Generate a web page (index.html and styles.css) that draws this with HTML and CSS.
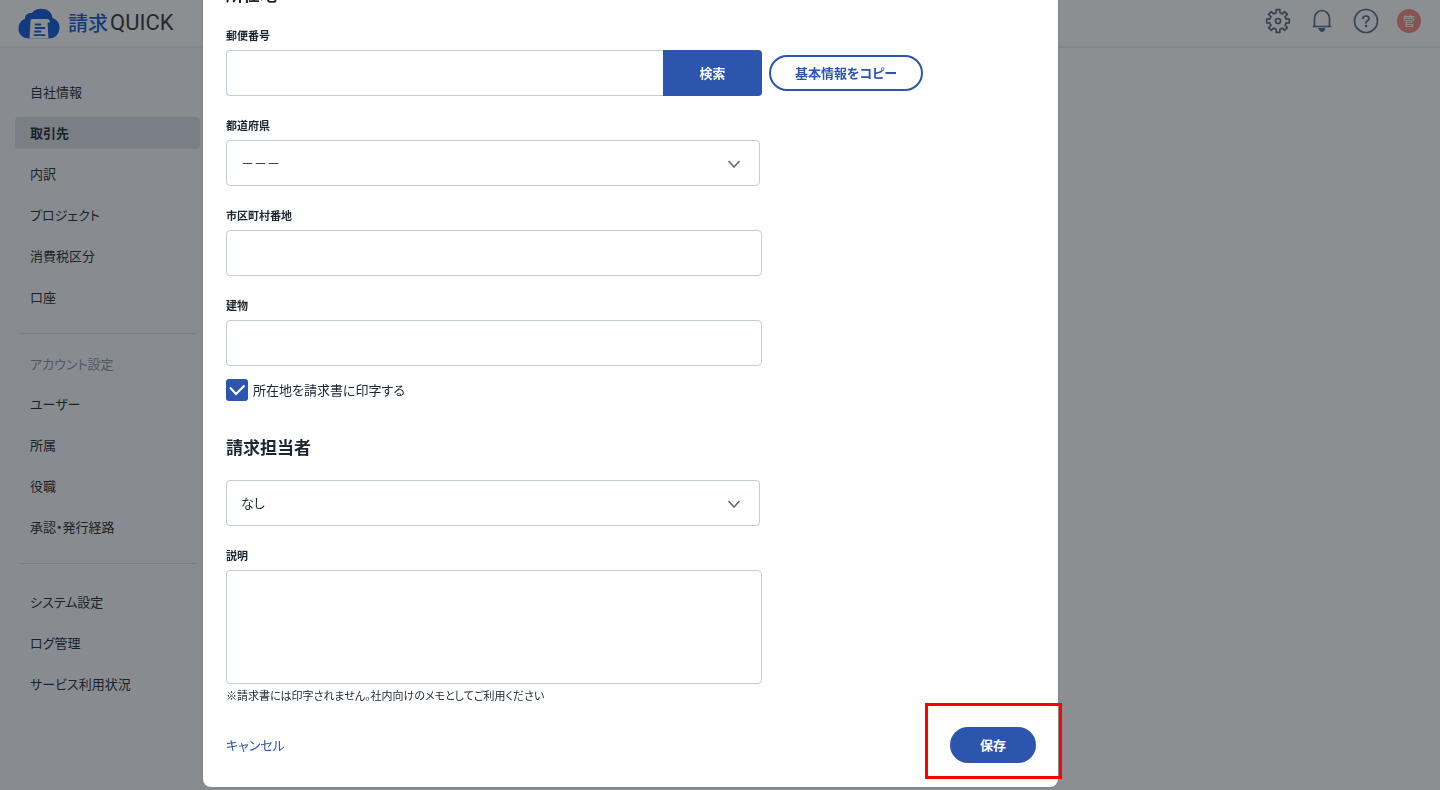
FILE: index.html
```html
<!DOCTYPE html>
<html lang="ja">
<head>
<meta charset="utf-8">
<title>請求QUICK</title>
<link rel="stylesheet" href="styles.css">
</head>
<body>
<header class="header">
  <a class="logo" href="#">
    <svg class="logo-mark" width="42" height="32" viewBox="0 0 42 32" aria-hidden="true">
      <path fill="#0d54d8" d="M11 30.500C5 30.500 .5 26.500 .5 21C.5 16 3 12 7 11C6.500 7 10 4.500 14 5C16 2 19 .8 23 .8C29 .8 34 4 34.500 10C39 11.500 41.500 15 41.500 19.500C41.500 26 37 30.500 31 30.500Z"/>
      <path fill="#fff" d="M14 11H30Q32 11.500 32 14.500H29.500L30.500 30.500H11.500L12.500 13Q12.600 11.200 14 11Z"/>
      <path stroke="#0d54d8" stroke-width="1.800" stroke-linecap="round" fill="none" d="M17.500 16.500H22.500M17.500 20H26.500M17 23.500H22.500M16.500 27.200H26.500"/>
    </svg>
    <span class="logo-name">請求</span><span class="logo-quick">QUICK</span>
  </a>
  <div class="tools">
    <button class="tool" aria-label="設定">
      <svg width="26" height="26" viewBox="0 0 26 26"><path d="M11.100 1.700H14.900V4.800L17.450 5.860L19.650 3.670L22.330 6.350L20.140 8.550L21.200 11.100H24.300V14.900H21.200L20.140 17.450L22.330 19.650L19.650 22.330L17.450 20.140L14.900 21.200V24.300H11.100V21.200L8.550 20.140L6.350 22.330L3.670 19.650L5.860 17.450L4.800 14.900H1.700V11.100H4.800L5.860 8.550L3.670 6.350L6.350 3.670L8.550 5.860L11.100 4.800Z"/><circle cx="13" cy="13" r="2.500"/></svg>
    </button>
    <button class="tool" aria-label="通知">
      <svg width="26" height="26" viewBox="0 0 26 26"><path d="M4.500 18.500H21.500M5.500 18.500V10.500A7.500 8 0 0 1 20.500 10.500V18.500"/><path class="clapper" d="M10 20.500H16Q15.500 23.500 13 23.500T10 20.500Z"/></svg>
    </button>
    <button class="tool" aria-label="ヘルプ">
      <svg width="26" height="26" viewBox="0 0 26 26"><circle cx="13" cy="13" r="11.500"/><path d="M10 10.500Q10 8 13 8T16 10.500Q16 12 14.500 12.800T13 15"/><circle cx="13" cy="18" r=".5"/></svg>
    </button>
    <button class="avatar">管</button>
  </div>
</header>

<div class="page">
  <nav class="sidebar">
    <ul class="menu">
      <li><a href="#">自社情報</a></li>
      <li><a class="current" href="#" aria-current="page">取引先</a></li>
      <li><a href="#">内訳</a></li>
      <li><a href="#">プロジェクト</a></li>
      <li><a href="#">消費税区分</a></li>
      <li><a href="#">口座</a></li>
    </ul>
    <hr class="rule">
    <h2 class="menu-title">アカウント設定</h2>
    <ul class="menu">
      <li><a href="#">ユーザー</a></li>
      <li><a href="#">所属</a></li>
      <li><a href="#">役職</a></li>
      <li><a href="#">承認・発行経路</a></li>
    </ul>
    <hr class="rule">
    <ul class="menu menu-last">
      <li><a href="#">システム設定</a></li>
      <li><a href="#">ログ管理</a></li>
      <li><a href="#">サービス利用状況</a></li>
    </ul>
  </nav>
</div>

<div class="overlay">
  <form class="modal" role="dialog" aria-label="取引先">
    <h2 class="section-title">所在地</h2>
    <div class="fields">
      <div class="field">
        <label for="zip">郵便番号</label>
        <div class="zip-row">
          <div class="zip-group">
            <input class="box zip" id="zip" type="text">
            <button class="search" type="button">検索</button>
          </div>
          <button class="copy" type="button">基本情報をコピー</button>
        </div>
      </div>
      <div class="field">
        <label for="pref">都道府県</label>
        <div class="select">
          <select class="box" id="pref"><option>－－－</option></select>
          <svg class="chevron" width="14" height="8" viewBox="0 0 14 8" aria-hidden="true"><path d="M1.500 1L7 7L12.500 1"/></svg>
        </div>
      </div>
      <div class="field">
        <label for="city">市区町村番地</label>
        <input class="box" id="city" type="text">
      </div>
      <div class="field">
        <label for="building">建物</label>
        <input class="box" id="building" type="text">
      </div>
    </div>
    <div class="check">
      <input id="print" type="checkbox" checked>
      <svg class="tick" width="22" height="22" viewBox="0 0 22 22" aria-hidden="true"><path d="M4 8.500L10 15L18.500 6.500"/></svg>
      <label for="print">所在地を請求書に印字する</label>
    </div>

    <h2 class="section-title contact-title" id="contact-title">請求担当者</h2>
    <div class="fields">
      <div class="select">
        <select class="box" aria-labelledby="contact-title"><option>なし</option></select>
        <svg class="chevron" width="14" height="8" viewBox="0 0 14 8" aria-hidden="true"><path d="M1.500 1L7 7L12.500 1"/></svg>
      </div>
      <div class="field">
        <label for="memo">説明</label>
        <textarea class="box memo" id="memo"></textarea>
      </div>
    </div>
    <p class="note">※請求書には印字されません。社内向けのメモとしてご利用ください</p>

    <footer class="actions">
      <a class="cancel" href="#">キャンセル</a>
      <div class="marked">
        <button class="save" type="submit">保存</button>
      </div>
    </footer>
  </form>
</div>
</body>
</html>
```

FILE: styles.css
```css
* {
  box-sizing: border-box;
}

body {
  margin: 0;
  min-height: 100vh;
  display: flex;
  flex-direction: column;
  overflow: hidden;
  background: #fff;
  color: #1c2630;
  font-family: "Noto Sans CJK JP", "Noto Sans", sans-serif;
  font-feature-settings: "palt";
  font-size: 13px;
  line-height: 20px;
}

button,
input,
select,
textarea {
  font: inherit;
  font-feature-settings: inherit;
  color: inherit;
}

button {
  border: 0;
  padding: 0;
  cursor: pointer;
}

a {
  color: inherit;
  text-decoration: none;
}

/* Header */
.header {
  display: flex;
  align-items: center;
  justify-content: space-between;
  height: 48px;
  padding: 0 19px 0 18px;
  border-bottom: 2px solid #edeff1;
}

.logo {
  display: flex;
  align-items: center;
}

.logo-mark {
  margin-top: 2px;
}

.logo-name {
  margin-left: 8px;
  color: #0d54d8;
  font-size: 20px;
  font-weight: 500;
}

.logo-quick {
  margin-left: 2px;
  color: #333;
  font-family: Roboto, sans-serif;
  font-size: 22px;
}

.tools {
  display: flex;
  align-items: center;
  gap: 18px;
  padding-bottom: 4px;
}

.tool {
  height: 26px;
  background: none;
}

.tool svg {
  display: block;
  fill: none;
  stroke: #536780;
  stroke-width: 1.7;
  stroke-linejoin: round;
  stroke-linecap: round;
}

.tool .clapper {
  fill: #536780;
  stroke-width: 1;
}

.avatar {
  width: 24px;
  height: 24px;
  border-radius: 50%;
  background: #fb8582;
  color: #fff;
  font-size: 12px;
  font-weight: 500;
  line-height: 24px;
}

/* Sidebar */
.page {
  flex: 1;
  display: flex;
}

.sidebar {
  width: 204px;
  padding: 28px 4px 0 15px;
  background: #f9f9fc;
}

.menu {
  display: flex;
  flex-direction: column;
  gap: 9px;
  margin: 0;
  padding: 0;
  list-style: none;
}

.menu a {
  display: block;
  padding: 6px 15px;
  border-radius: 4px;
}

.menu .current {
  background: #dddee6;
  font-weight: 700;
}

.rule {
  margin: 20px 4px;
  border: 0;
  border-top: 1px solid #dddfe4;
}

.menu-title {
  margin: 0 0 14px;
  padding: 0 15px;
  color: #8a939f;
  font-size: 13px;
  font-weight: 400;
}

.menu-last {
  padding-top: 2px;
}

/* Dialog */
.overlay {
  position: fixed;
  inset: 0;
  display: flex;
  align-items: flex-end;
  padding: 0 16px 3px 203px;
  background: rgba(23, 31, 36, .5);
}

.modal {
  flex: 0 1 855px;
  padding: 24px 22px 24px 23px;
  border-radius: 8px;
  background: #fff;
  box-shadow: 0 0 2px rgba(0, 0, 0, .2);
}

.section-title {
  margin: 0 0 21px;
  font-size: 17px;
  font-weight: 700;
  line-height: 24px;
}

.contact-title {
  margin-top: 34px;
}

.fields {
  display: flex;
  flex-direction: column;
  gap: 21px;
}

.field {
  display: flex;
  flex-direction: column;
  gap: 7px;
}

.field label {
  font-size: 11px;
  font-weight: 700;
  line-height: 16px;
}

.box {
  display: block;
  width: 100%;
  max-width: 536px;
  height: 46px;
  padding: 0 14px;
  border: 1px solid #c3ccd8;
  border-radius: 4px;
  background: #fff;
}

.zip-row {
  display: flex;
  align-items: center;
  gap: 7px;
}

.zip-group {
  display: flex;
  flex: 0 1 536px;
}

.zip {
  flex: 1;
  min-width: 0;
  border-right: 0;
  border-radius: 4px 0 0 4px;
}

.search {
  width: 99px;
  border-radius: 0 4px 4px 0;
  background: #2c55ae;
  color: #fff;
  font-weight: 700;
}

.copy {
  height: 36px;
  padding: 0 24px;
  border: 2px solid #2c55ae;
  border-radius: 18px;
  background: #fff;
  color: #2c55ae;
  font-weight: 700;
}

.select {
  position: relative;
  max-width: 534px;
}

.select select {
  appearance: none;
}

.chevron {
  position: absolute;
  right: 19px;
  top: 20px;
  fill: none;
  stroke: #5c6b7c;
  stroke-width: 1.6;
  pointer-events: none;
}

.check {
  position: relative;
  display: flex;
  align-items: center;
  gap: 5px;
  margin-top: 13px;
}

.check input {
  appearance: none;
  width: 22px;
  height: 22px;
  margin: 0;
  border-radius: 3px;
  background: #2c55ae;
}

.tick {
  position: absolute;
  left: 0;
  top: 0;
  fill: none;
  stroke: #fff;
  stroke-width: 2;
  pointer-events: none;
}

.memo {
  height: 114px;
  padding: 12px 14px;
  resize: none;
}

.note {
  margin: 3px 0 0;
  font-size: 11px;
  line-height: 16px;
}

.actions {
  display: flex;
  align-items: center;
  justify-content: space-between;
  margin-top: 24px;
}

.cancel {
  color: #2c55ae;
}

.marked {
  position: relative;
}

.marked::after {
  content: "";
  position: absolute;
  inset: -24px -26px -16px -25px;
  border: 3px solid #f00;
  pointer-events: none;
}

.save {
  display: block;
  width: 86px;
  height: 36px;
  border-radius: 18px;
  background: #2c55ae;
  color: #fff;
  font-weight: 700;
}
```
